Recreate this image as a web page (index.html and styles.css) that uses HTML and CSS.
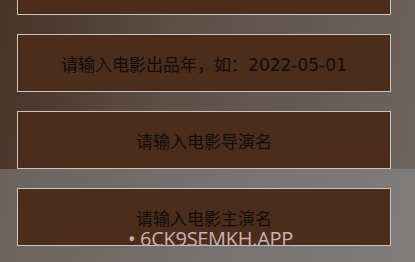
FILE: index.html
```html
<!DOCTYPE html>
<html lang="zh">
<head>
<meta charset="utf-8">
<link rel="stylesheet" href="styles.css">
</head>
<body>
<div class="page">
  <div class="form">
    <div class="field">请输入电影名称</div>
    <div class="field">请输入电影出品年，如：2022-05-01</div>
    <div class="field">请输入电影导演名</div>
    <div class="field">请输入电影主演名</div>
  </div>
  <div class="watermark">• 6CK9SEMKH.APP</div>
</div>
</body>
</html>
```
FILE: styles.css
```css
html, body {
  margin: 0;
  padding: 0;
}
body {
  width: 415px;
  height: 262px;
  overflow: hidden;
  font-family: "Noto Sans CJK SC", "Noto Sans", sans-serif;
}
.page {
  position: relative;
  width: 415px;
  height: 262px;
  overflow: hidden;
  background:
    linear-gradient(100deg, #6a625d 0%, #75716e 45%, #7e7d7b 100%) 0 169px / 100% 93px no-repeat,
    linear-gradient(100deg, #4b3527 0%, #4e392c 12%, #5d4f46 40%, #655a53 70%, #6c645e 100%) 0 0 / 100% 169px no-repeat;
}
.form {
  display: flex;
  flex-direction: column;
  gap: 19px;
  margin: -43px 24px 0 17px;
}
.field {
  box-sizing: border-box;
  height: 58px;
  background: #4a2d1b;
  border: 1.5px solid #cfc4bb;
  display: flex;
  align-items: center;
  justify-content: center;
  color: #140c07;
  font-family: "DejaVu Sans", "Noto Sans CJK SC", sans-serif;
  font-size: 17px;
}
.watermark {
  position: absolute;
  left: 128px;
  top: 226px;
  color: #cab1b3;
  font-family: "Open Sans", "Noto Sans", sans-serif;
  font-size: 20px;
  line-height: 26px;
  letter-spacing: -0.3px;
}
```
